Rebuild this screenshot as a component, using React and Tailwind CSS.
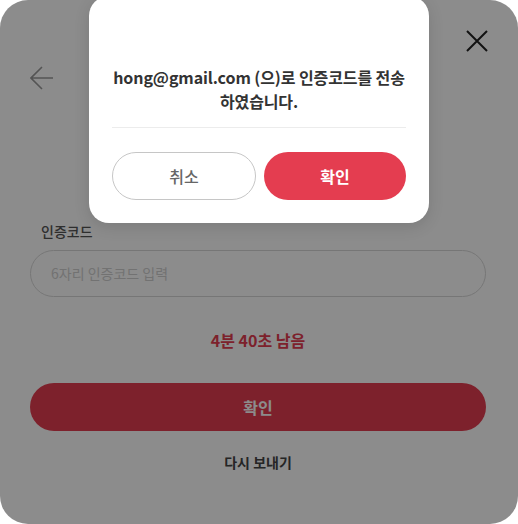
import React from "react";

const FONT = { fontFamily: '"Noto Sans CJK KR", "Noto Sans", sans-serif' };

function CloseIcon() {
    return (
        <svg width="22" height="22" viewBox="0 0 22 22" fill="none">
            <path d="M1 1L21 21M21 1L1 21" stroke="#222" strokeWidth="2" />
        </svg>
    );
}

function BackIcon() {
    return (
        <svg width="24" height="24" viewBox="0 0 24 24" fill="none">
            <path d="M1 12H23M12 1L1 12L12 23" stroke="#9a9a9a" strokeWidth="1.6" />
        </svg>
    );
}

function SentDialog() {
    return (
        <div className="absolute left-[89px] top-[-4px] w-[340px] rounded-[20px] bg-white px-[23px] pt-[69px] pb-[23px] shadow-[0_4px_16px_rgba(0,0,0,0.12)]">
            <p className="text-center text-[16px] leading-[24px] font-semibold tracking-[-0.1px] text-[#333]">
                hong@gmail.com (으)로 인증코드를 전송
                <br />
                하였습니다.
            </p>
            <div className="mt-[14px] h-px bg-[#ececec]" />
            <div className="mt-[24px] flex gap-[8px]">
                <button className="h-[48px] flex-1 rounded-full border border-[#c6c6c6] bg-white text-[16px] font-medium text-[#666]">
                    취소
                </button>
                <button className="h-[48px] flex-1 rounded-full bg-[#e43d50] text-[16px] font-bold text-white">
                    확인
                </button>
            </div>
        </div>
    );
}

export default function App() {
    return (
        <div className="h-[524px] w-[518px] bg-white" style={FONT}>
            <div className="relative h-full w-full overflow-hidden rounded-[28px] bg-white">
                <div className="pl-[30px] pr-[32px]">
                    <div className="-mr-[2px] flex justify-end pt-[30px]">
                        <CloseIcon />
                    </div>
                    <div className="mt-[14px]">
                        <BackIcon />
                    </div>
                    <label className="mt-[132px] block pl-[11px] text-[14px] leading-[19px] font-medium text-[#555]">
                        인증코드
                    </label>
                    <div className="mt-[9px] flex h-[47px] items-center rounded-full border border-[#d8d8d8] px-[20px] text-[14px] text-[#d0d0d0]">
                        6자리 인증코드 입력
                    </div>
                    <p className="mt-[32px] text-center text-[16px] leading-[23px] font-bold text-[#e43d50]">
                        4분 40초 남음
                    </p>
                    <button className="mt-[31px] h-[48px] w-full rounded-full bg-[#e43d50] text-[16px] font-bold text-white">
                        확인
                    </button>
                    <p className="mt-[22px] text-center text-[14px] leading-[19px] font-bold text-[#444]">
                        다시 보내기
                    </p>
                </div>
                <div className="absolute inset-0 bg-black/45" />
                <SentDialog />
            </div>
        </div>
    );
}
